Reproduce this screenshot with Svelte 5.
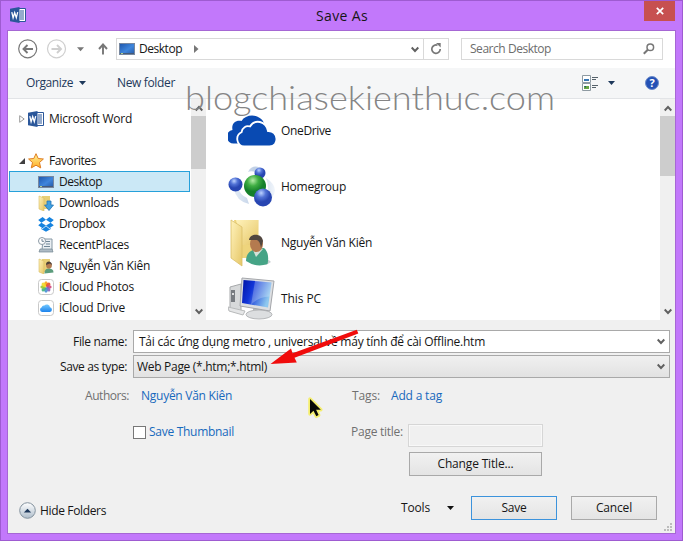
<script>
  const favorites = [
    { name: 'Desktop', icon: 'desktop', w: 43, selected: true },
    { name: 'Downloads', icon: 'downloads', w: 60 },
    { name: 'Dropbox', icon: 'dropbox', w: 46 },
    { name: 'RecentPlaces', icon: 'recent', w: 70 },
    { name: 'Nguyễn Văn Kiên', icon: 'user', w: 91 },
    { name: 'iCloud Photos', icon: 'photos', w: 75 },
    { name: 'iCloud Drive', icon: 'drive', w: 66 }
  ];
  const places = [
    { name: 'OneDrive', icon: 'onedrive', w: 50 },
    { name: 'Homegroup', icon: 'homegroup', w: 65 },
    { name: 'Nguyễn Văn Kiên', icon: 'bigUser', w: 91 },
    { name: 'This PC', icon: 'pc', w: 40 }
  ];
  const petals = ['#f7a51c', '#e8542f', '#d1497f', '#8c62b8', '#4a92d6', '#43b483', '#99c83a', '#f3d82a'];

  // Adjusts tracking so that a label takes up the given width.
  function fit(node, width) {
    node.style.letterSpacing = '0px';
    const natural = node.getBoundingClientRect().width;
    node.style.letterSpacing = (width - natural) / node.textContent.length + 'px';
  }
</script>

{#snippet label(text, w, cls = '')}<span class="t {cls}" use:fit={w}>{text}</span>{/snippet}

{#snippet chevron()}
  <svg class="chev" width="8" height="7" viewBox="0 0 8 7"><path d="M.7 1.500 4 5 7.300 1.500" fill="none" stroke="#606060" stroke-width="1.900" /></svg>
{/snippet}

{#snippet word()}
  <svg width="16" height="16" viewBox="0 0 16 16">
    <path d="M8.500 1.500h7v13h-7z" fill="#fff" stroke="#2b579a" />
    <path d="M10 4h4M10 6h4M10 8h4M10 10h4M10 12h4" stroke="#2b579a" />
    <path d="M0 1.800 9.500 0v16L0 14.200z" fill="#2b579a" />
    <path d="m1.800 5.200 1.300 5.500 1.600-5 1.600 5 1.400-5.500" fill="none" stroke="#fff" stroke-width="1.300" />
  </svg>
{/snippet}

{#snippet icon(kind)}
  {#if kind === 'desktop'}
    <svg width="16" height="16" viewBox="0 0 16 16">
      <rect x=".5" y="2.500" width="15" height="11" fill="url(#screen)" stroke="#7888a0" />
      <path d="M1 12.500h14" stroke="#465b78" /><path d="M2 12.500h2" stroke="#b2d18e" />
    </svg>
  {:else if kind === 'downloads'}
    <svg width="16" height="16" viewBox="0 0 16 16">
      <path d="M4 1h8v13H4z" fill="#e8cf77" /><path d="m1 1 5 2v13l-5-2z" fill="url(#folder)" stroke="#d8bd63" stroke-width=".6" />
      <path d="M9 6h4v4h2.500L11 15.500 6.500 10H9z" fill="#3fa0e2" stroke="#2474b4" stroke-width=".8" />
    </svg>
  {:else if kind === 'dropbox'}
    <svg width="16" height="16" viewBox="0 0 16 16" fill="#1683df">
      <path d="M4.600 1 8 3.800 3.400 6.700.2 4.100zM11.400 1 8 3.800l4.600 2.900 3.200-2.600zM.2 9.200l3.200-2.500L8 9.500l-3.400 2.800zM15.800 9.200l-3.200-2.500L8 9.500l3.400 2.800zM8 10.200l3.400 2.800 1.400-.9v1L8 15.800l-4.800-2.700v-1l1.400.9z" />
    </svg>
  {:else if kind === 'recent'}
    <svg width="16" height="16" viewBox="0 0 16 16">
      <path d="M5 2h9v11H4z" fill="#e9eef2" stroke="#8798a4" /><path d="M8 4.500h4M8 7h4M6 9.500h6" stroke="#718797" />
      <path d="m2 12-1 3h14l-1-3z" fill="#aebbc5" stroke="#748692" stroke-width=".7" />
      <circle cx="4" cy="4" r="3.500" fill="#fff" stroke="#8c9aa5" /><path d="M4 2v2.300h2" fill="none" stroke="#536b7d" stroke-width=".8" />
    </svg>
  {:else if kind === 'user'}
    <svg width="16" height="16" viewBox="0 0 16 16">
      <path d="M4 1h8v13H4z" fill="#e8cf77" /><path d="m1 1 5 2v13l-5-2z" fill="url(#folder)" stroke="#d8bd63" stroke-width=".6" />
      <path d="M6.500 15.500c0-4 2-5 4.500-5s4.500 1 4.500 4z" fill="#5b9c7c" /><circle cx="11" cy="7.500" r="2.900" fill="#b37b50" />
      <path d="M8 7c0-5 6-4 6 0l-2-1.500z" fill="#4d4038" />
    </svg>
  {:else if kind === 'photos'}
    <svg width="16" height="16" viewBox="0 0 16 16">
      <rect x=".5" y=".5" width="15" height="15" rx="3" fill="#fff" stroke="#c9c9c9" />
      {#each petals as color, i}
        <ellipse cx="8" cy="4.900" rx="1.800" ry="2.600" fill={color} opacity=".92" transform="rotate({i * 45} 8 8)" />
      {/each}
    </svg>
  {:else if kind === 'drive'}
    <svg width="16" height="16" viewBox="0 0 16 16">
      <rect x=".5" y=".5" width="15" height="15" rx="3" fill="#fff" stroke="#c9c9c9" />
      <path d="M4 12a2.500 2.500 0 0 1-.3-4.800A2.300 2.300 0 0 1 6.300 5.500 3.300 3.300 0 0 1 12 7.300 2.400 2.400 0 0 1 12 12z" fill="url(#cloud)" />
    </svg>
  {:else if kind === 'onedrive'}
    <svg width="48" height="48" viewBox="0 0 48 48">
      <path d="M6 36.500A6.800 6.800 0 0 1 4.500 23C3 16 8.500 12.500 13.500 14 18 6.500 32 6.500 36 16L20 36.500z" fill="#094ab2" />
      <path d="M16 39.500a7.500 7.500 0 0 1-2.500-14.200c.8-5 4.500-6.800 8.500-5.800C26.500 12 38 13.500 40 24c10.500-.5 11.500 15.500 1.500 15.500z" fill="#094ab2" stroke="#fff" stroke-width="1.800" />
    </svg>
  {:else if kind === 'homegroup'}
    <svg width="48" height="48" viewBox="0 0 48 48">
      <path d="M20 9c3-7 12-7 14-1l-4 3q-5-4-10-2M6 26q2 12 15 15l-2-6q-7-3-9-10M38 15q14 9 6 20l-6-1q4-9 0-19" fill="url(#trail)" opacity=".8" />
      <circle cx="32" cy="10" r="5.500" fill="url(#blueBall)" /><circle cx="7.500" cy="21.500" r="7" fill="url(#blueBall)" />
      <circle cx="27" cy="23" r="11" fill="url(#greenBall)" /><circle cx="35" cy="34.500" r="9" fill="url(#blueBall)" />
    </svg>
  {:else if kind === 'bigUser'}
    <svg width="48" height="48" viewBox="0 0 48 48">
      <path d="M25 43q12-7 18 0l-5 3z" fill="#c9cfd1" />
      <path d="M6 1h24.500v38H12z" fill="#eed47c" /><path d="M8 1h22v25H14z" fill="url(#folder)" />
      <path d="m3 1 11 7v39L3 39z" fill="url(#folder)" stroke="#dabf68" stroke-width=".8" />
      <path d="M18 42c0-8 5-11 10-12l8-1c4 3 5 10 3.500 16q-11 4-21.500-3z" fill="#46a486" />
      <path d="m25 31 3 7 7-8" fill="#d5e1d9" />
      <ellipse cx="28.500" cy="25" rx="6.500" ry="8" fill="#b47a4f" /><path d="M21 21c1-7 13-7 14 1l-2 7q-1-7-4-8z" fill="#51463f" />
    </svg>
  {:else}
    <svg width="48" height="48" viewBox="0 0 48 48">
      <path d="m2 12 11-3v28L2 34z" fill="#d7d9da" stroke="#a7a9ab" /><path d="M3 15h4v12H3z" fill="#777b80" /><circle cx="5" cy="19" r="1" fill="#fff" />
      <path d="m25 30 9 2v7h-9z" fill="#b8bbc0" /><ellipse cx="31" cy="39.500" rx="13" ry="4.500" fill="#dcdee0" stroke="#b6b8ba" />
      <path d="m14 3 32 3-4 30-30-5z" fill="#dddfe2" stroke="#a4a6aa" /><path d="m15.500 5 28 2.500-3.500 25-26-4.500z" fill="url(#monitor)" />
      <path d="m27 6 16.500 1.500-2 14Q30 22 23 30z" fill="#fff" opacity=".24" />
      <path d="m0 32 17 4-2 4L1 36z" fill="#e5e6e7" stroke="#b8babb" />
    </svg>
  {/if}
{/snippet}

<svg class="defs" width="0" height="0">
  <defs>
    <linearGradient id="screen" x2="1" y2="1"><stop stop-color="#1d55ab" /><stop offset=".55" stop-color="#3f86dc" /><stop offset="1" stop-color="#2558a4" /></linearGradient>
    <linearGradient id="folder" x2="1" y2="1"><stop stop-color="#fff2bb" /><stop offset="1" stop-color="#e6c768" /></linearGradient>
    <linearGradient id="cloud" x2="0" y2="1"><stop stop-color="#74c9ff" /><stop offset="1" stop-color="#1c83ed" /></linearGradient>
    <linearGradient id="monitor" x2="1" y2=".35"><stop stop-color="#0013a4" /><stop offset=".4" stop-color="#1235d8" /><stop offset="1" stop-color="#8ec8ef" /></linearGradient>
    <linearGradient id="trail"><stop stop-color="#dce7f4" /><stop offset=".5" stop-color="#b0c4df" /><stop offset="1" stop-color="#edf3fa" /></linearGradient>
    <linearGradient id="star" x2="0" y2="1"><stop stop-color="#fff49b" /><stop offset="1" stop-color="#ffad25" /></linearGradient>
    <linearGradient id="round" x2="0" y2="1"><stop stop-color="#fff" /><stop offset="1" stop-color="#aebdcb" /></linearGradient>
    <radialGradient id="blueBall" cx=".4" cy=".25"><stop stop-color="#bcd2ff" /><stop offset=".5" stop-color="#5273d6" /><stop offset="1" stop-color="#2846b2" /></radialGradient>
    <radialGradient id="greenBall" cx=".4" cy=".25"><stop stop-color="#b6eca8" /><stop offset=".5" stop-color="#3fae43" /><stop offset="1" stop-color="#15802b" /></radialGradient>
  </defs>
</svg>

<div class="window">
  <header>
    <span class="app">{@render word()}</span>
    {@render label('Save As', 52, 'title')}
    <span class="close"><svg width="8" height="8" viewBox="0 0 8 8"><path d="m.8.8 6.400 6.400M7.200.8.8 7.200" stroke="#fff" stroke-width="1.700" /></svg></span>
  </header>

  <main>
    <nav>
      <svg class="arrows" width="108" height="37" viewBox="0 0 108 37" fill="none">
        <circle cx="19.700" cy="17.800" r="9" stroke="#777" stroke-width="1.200" />
        <path d="M25 18H15.500m4-4-4 4 4 4" stroke="#777" stroke-width="1.900" />
        <circle cx="48.500" cy="17.800" r="9" stroke="#cfcfcf" stroke-width="1.200" />
        <path d="M43.500 18H53m-4-4 4 4-4 4" stroke="#cfcfcf" stroke-width="1.900" />
        <path d="M69 16.300h7l-3.500 4z" fill="#777" />
        <path d="M95 23.500v-10m-4 4.500 4-4.500 4 4.500" stroke="#777" stroke-width="1.900" />
      </svg>
      <div class="address">
        {@render icon('desktop')}
        {@render label('Desktop', 43)}
        <svg class="crumb" width="5" height="8"><path d="m0 0 4.500 4L0 8z" fill="#777" /></svg>
        <span class="drop">{@render chevron()}</span>
        <span class="refresh"><svg width="12" height="12" viewBox="0 0 12 12" fill="none"><path d="M7.500 2.200A4.200 4.200 0 1 0 10.200 6" stroke="#777" stroke-width="1.700" /><path d="M6 0h4.700v4.500z" fill="#777" /></svg></span>
      </div>
      <div class="search">
        {@render label('Search Desktop', 81)}
        <svg width="12" height="12" viewBox="0 0 12 12" fill="none" stroke="#777"><circle cx="7.300" cy="4.300" r="3.300" stroke-width="1.500" /><path d="m4.800 6.800-4 4" stroke-width="2" /></svg>
      </div>
    </nav>

    <div class="toolbar">
      {@render label('Organize', 47)}
      <svg class="tri" width="7" height="4"><path d="M0 0h7L3.500 4z" fill="#1e395b" /></svg>
      {@render label('New folder', 58, 'new')}
      <svg class="view" width="16" height="16" viewBox="0 0 16 16">
        <path d="M.5.5h8v7h-8zM.5 8.500h8v7h-8z" fill="#fff" stroke="#8e9aa2" />
        <path d="M2 4h5v2H2z" fill="#3475b4" /><path d="M2 11h5v3H2z" fill="#68a743" /><path d="M2 11h2v2z" fill="#21596c" />
        <path d="M10 2.500h6M10 4.500h4M10 10.500h6M10 12.500h4" stroke="#55616a" />
      </svg>
      <svg class="tri view-tri" width="7" height="4"><path d="M0 0h7L3.500 4z" fill="#1e395b" /></svg>
      <span class="help">?</span>
    </div>

    <div class="panes">
      <aside>
        <div class="row group">
          <svg class="tree" width="6" height="8"><path d="m.7.7 4.500 3.300L.7 7.300z" fill="#fff" stroke="#999" /></svg>
          {@render word()}{@render label('Microsoft Word', 83)}
        </div>
        <div class="row group favorites">
          <svg class="tree" width="6" height="6"><path d="M6 0v6H0z" fill="#404040" /></svg>
          <svg width="16" height="16" viewBox="0 0 16 16"><path d="m8 .7 2.200 4.800 5.200.5-3.900 3.500 1.200 5.400L8 12.200l-4.700 2.700 1.200-5.400L.6 6l5.200-.5z" fill="url(#star)" stroke="#df7c20" /></svg>
          {@render label('Favorites', 47)}
        </div>
        {#each favorites as f}
          <div class="row child" class:selected={f.selected}>{@render icon(f.icon)}{@render label(f.name, f.w)}</div>
        {/each}
      </aside>
      <div class="scroll left">
        <svg width="8" height="7" viewBox="0 0 8 7"><path d="M.7 5.500 4 2 7.300 5.500" fill="none" stroke="#606060" stroke-width="1.900" /></svg>
        <span class="thumb"></span>{@render chevron()}
      </div>
      <section>
        {#each places as p}
          <div class="place">{@render icon(p.icon)}{@render label(p.name, p.w)}</div>
        {/each}
      </section>
      <div class="scroll right">
        <svg width="8" height="7" viewBox="0 0 8 7"><path d="M.7 5.500 4 2 7.300 5.500" fill="none" stroke="#606060" stroke-width="1.900" /></svg>
        <span class="thumb"></span>{@render chevron()}
      </div>
    </div>

    <div class="form">
      <div class="field">
        <div class="name">{@render label('File name:', 54)}</div>
        <div class="box input">{@render label('Tải các ứng dụng metro , universal về máy tính để cài Offline.htm', 346)}{@render chevron()}</div>
      </div>
      <div class="field">
        <div class="name">{@render label('Save as type:', 67)}</div>
        <div class="box select">{@render label('Web Page (*.htm;*.html)', 130)}{@render chevron()}</div>
      </div>
      <div class="meta">
        {@render label('Authors:', 44, 'muted')}
        {@render label('Nguyễn Văn Kiên', 91, 'link author')}
        {@render label('Tags:', 28, 'muted tags')}
        {@render label('Add a tag', 51, 'link add')}
      </div>
      <div class="options">
        <span class="check"></span>
        {@render label('Save Thumbnail', 85, 'link')}
        {@render label('Page title:', 52, 'muted page')}
        <span class="page-title"></span>
      </div>
      <div class="btn change">{@render label('Change Title...', 76)}</div>
      <footer>
        <svg width="17" height="17" viewBox="0 0 17 17"><circle cx="8.500" cy="8.500" r="7.800" fill="url(#round)" stroke="#84929e" /><path d="M4.800 10.500h7.400L8.500 6.800z" fill="#1e395b" /></svg>
        {@render label('Hide Folders', 66, 'hide')}
        {@render label('Tools', 29, 'tools')}
        <svg class="tools-tri" width="7" height="4"><path d="M0 0h7L3.500 4z" fill="#111" /></svg>
        <div class="btn save">{@render label('Save', 25)}</div>
        <div class="btn cancel">{@render label('Cancel', 36)}</div>
      </footer>
    </div>
  </main>

  <svg class="overlay" width="683" height="541" viewBox="0 0 683 541">
    <text x="185" y="110" textLength="370" lengthAdjust="spacingAndGlyphs" font-family="Lato, sans-serif" font-weight="300" font-size="32.500" fill="#858585">blogchiasekienthuc.com</text>
    <path d="m356.800 329.800 1.500 3.600-63.800 24.300 2.300 4.800-26.300 1.500 20.500-15.500 1.600 4.800z" fill="#f00c0c" />
    <path d="M310 399v15l3.500-3.200 2.800 5.500 2.300-1.200-2.500-5.300h4.700z" fill="#f6ee4e" stroke="#f6ee4e" stroke-width="3.500" stroke-linejoin="round" opacity=".8" />
    <path d="M310 399v15l3.500-3.200 2.800 5.500 2.300-1.200-2.500-5.300h4.700z" fill="#080808" />
    <path d="M670 523h2v2h-2zM667 526h2v2h-2zM670 526h2v2h-2zM664 529h2v2h-2zM667 529h2v2h-2zM670 529h2v2h-2z" fill="#bcbcbc" />
  </svg>
</div>

<style>
  :global(body) { margin: 0; overflow: hidden; }
  * { box-sizing: border-box; }
  svg { display: block; flex: none; }
  .defs { position: absolute; }
  .window { position: relative; width: 683px; height: 541px; padding: 0 7px 7px; display: flex; flex-direction: column; background: #c278fb; border: 1px solid #9e5bd1; font: 12px/16px "Open Sans", "Noto Sans", sans-serif; color: #161616; }
  .t { white-space: pre; flex: none; }
  header { height: 29px; display: flex; flex: none; }
  .app { margin: 6px 0 0 2px; }
  .title { margin: 5px 0 0 290px; font-size: 14px; line-height: 20px; }
  .close { width: 31px; height: 20px; margin-left: auto; background: #c75050; display: grid; place-items: center; }
  main { height: 504px; border: 1px solid #a667d4; background: #f0f0f0; margin: 0 -1px; flex: none; }
  nav { height: 37px; background: #fff; display: flex; align-items: flex-start; }
  .address { width: 333px; height: 22px; margin-top: 7px; border: 1px solid #d9d9d9; display: flex; align-items: center; padding-left: 2px; }
  .address > .t { margin-left: 4px; }
  .crumb { margin-left: 12px; }
  .drop { margin-left: auto; margin-right: 4px; }
  .refresh { width: 25px; height: 20px; border-left: 1px solid #d9d9d9; display: grid; place-items: center; }
  .search { width: 202px; height: 22px; margin: 7px 0 0 12px; border: 1px solid #d9d9d9; display: flex; align-items: center; justify-content: space-between; padding: 0 7px 0 8px; color: #6d6d6d; }
  .toolbar { height: 31px; background: #f5f6f7; border-bottom: 1px solid #e2e4e7; display: flex; align-items: center; padding-left: 18px; color: #1e395b; }
  .tri { margin-left: 6px; }
  .new { margin-left: 31px; }
  .view { margin-left: auto; }
  .view-tri { margin-left: 10px; }
  .help { width: 14px; height: 14px; margin: 0 16px 0 30px; border-radius: 50%; border: 1px solid #6c8bca; background: #2451b5; color: #fff; font-size: 11px; line-height: 12px; font-weight: 700; text-align: center; }
  .panes { height: 221px; background: #fff; display: flex; }
  aside { width: 183px; padding: 9px 1px 0; }
  .row { height: 21px; display: flex; align-items: center; }
  .group { padding-left: 10px; }
  .tree { margin-right: 3px; }
  .group .t { margin-left: 5px; }
  .favorites { margin-top: 21px; }
  .child { border: 1px solid transparent; padding-left: 28px; }
  .child .t { margin-left: 5px; }
  .selected { background: #cbe8f6; border-color: #26a0da; }
  .scroll { width: 15px; background: #f0f0f0; display: flex; flex-direction: column; align-items: center; padding: 6px 0 5px; }
  .thumb { width: 15px; height: 53px; margin-top: 4px; background: #cdcdcd; }
  .right .thumb { height: 60px; }
  .scroll .chev { margin-top: auto; }
  section { flex: 1; padding: 4px 0 0 22px; overflow: hidden; }
  .place { height: 56px; display: flex; align-items: center; }
  .place .t { margin-left: 5px; }
  .form { display: flex; flex-direction: column; padding-top: 10px; }
  .field { height: 25px; display: flex; align-items: flex-start; }
  .name { width: 125px; padding: 4px 6px 0 0; display: flex; justify-content: flex-end; flex: none; }
  .box { width: 537px; height: 23px; border: 1px solid #a9a9a9; display: flex; justify-content: space-between; align-items: center; padding: 0 4px 0 3px; }
  .input { background: #fff; padding-left: 5px; }
  .select { background: linear-gradient(#f0f0f0, #e2e2e2); }
  .meta { display: flex; height: 26px; padding: 8px 0 0 77px; }
  .muted { color: #707070; }
  .link { color: #1769bd; }
  .author { margin-left: 12px; }
  .tags { margin-left: 120px; }
  .add { margin-left: 11px; }
  .options { display: flex; height: 23px; margin-top: 18px; padding-left: 125px; }
  .check { width: 13px; height: 13px; border: 1px solid #777; background: #fff; margin: 2px 3px 0 0; flex: none; }
  .page { margin-left: 117px; }
  .page-title { width: 135px; height: 23px; border: 1px solid #d6d6d6; margin-left: 5px; flex: none; box-shadow: inset 0 0 0 1px #f8f8f8; }
  .btn { height: 24px; border: 1px solid #a9a9a9; background: linear-gradient(#f1f1f1, #e4e4e4); display: grid; place-items: center; }
  .change { width: 133px; margin: 5px 0 0 401px; }
  footer { display: flex; height: 37px; padding: 0 18px 0 11px; margin-top: 20px; align-items: flex-start; }
  footer > svg:first-child { margin-top: 6px; }
  .hide { margin: 7px 0 0 4px; }
  .tools { margin: 4px 0 0 295px; }
  .tools-tri { margin: 10px 0 0 17px; }
  .save { width: 86px; margin-left: 17px; border-color: #3c93dc; }
  .cancel { width: 86px; margin-left: 14px; }
  .overlay { position: absolute; left: -1px; top: -1px; pointer-events: none; }
</style>
